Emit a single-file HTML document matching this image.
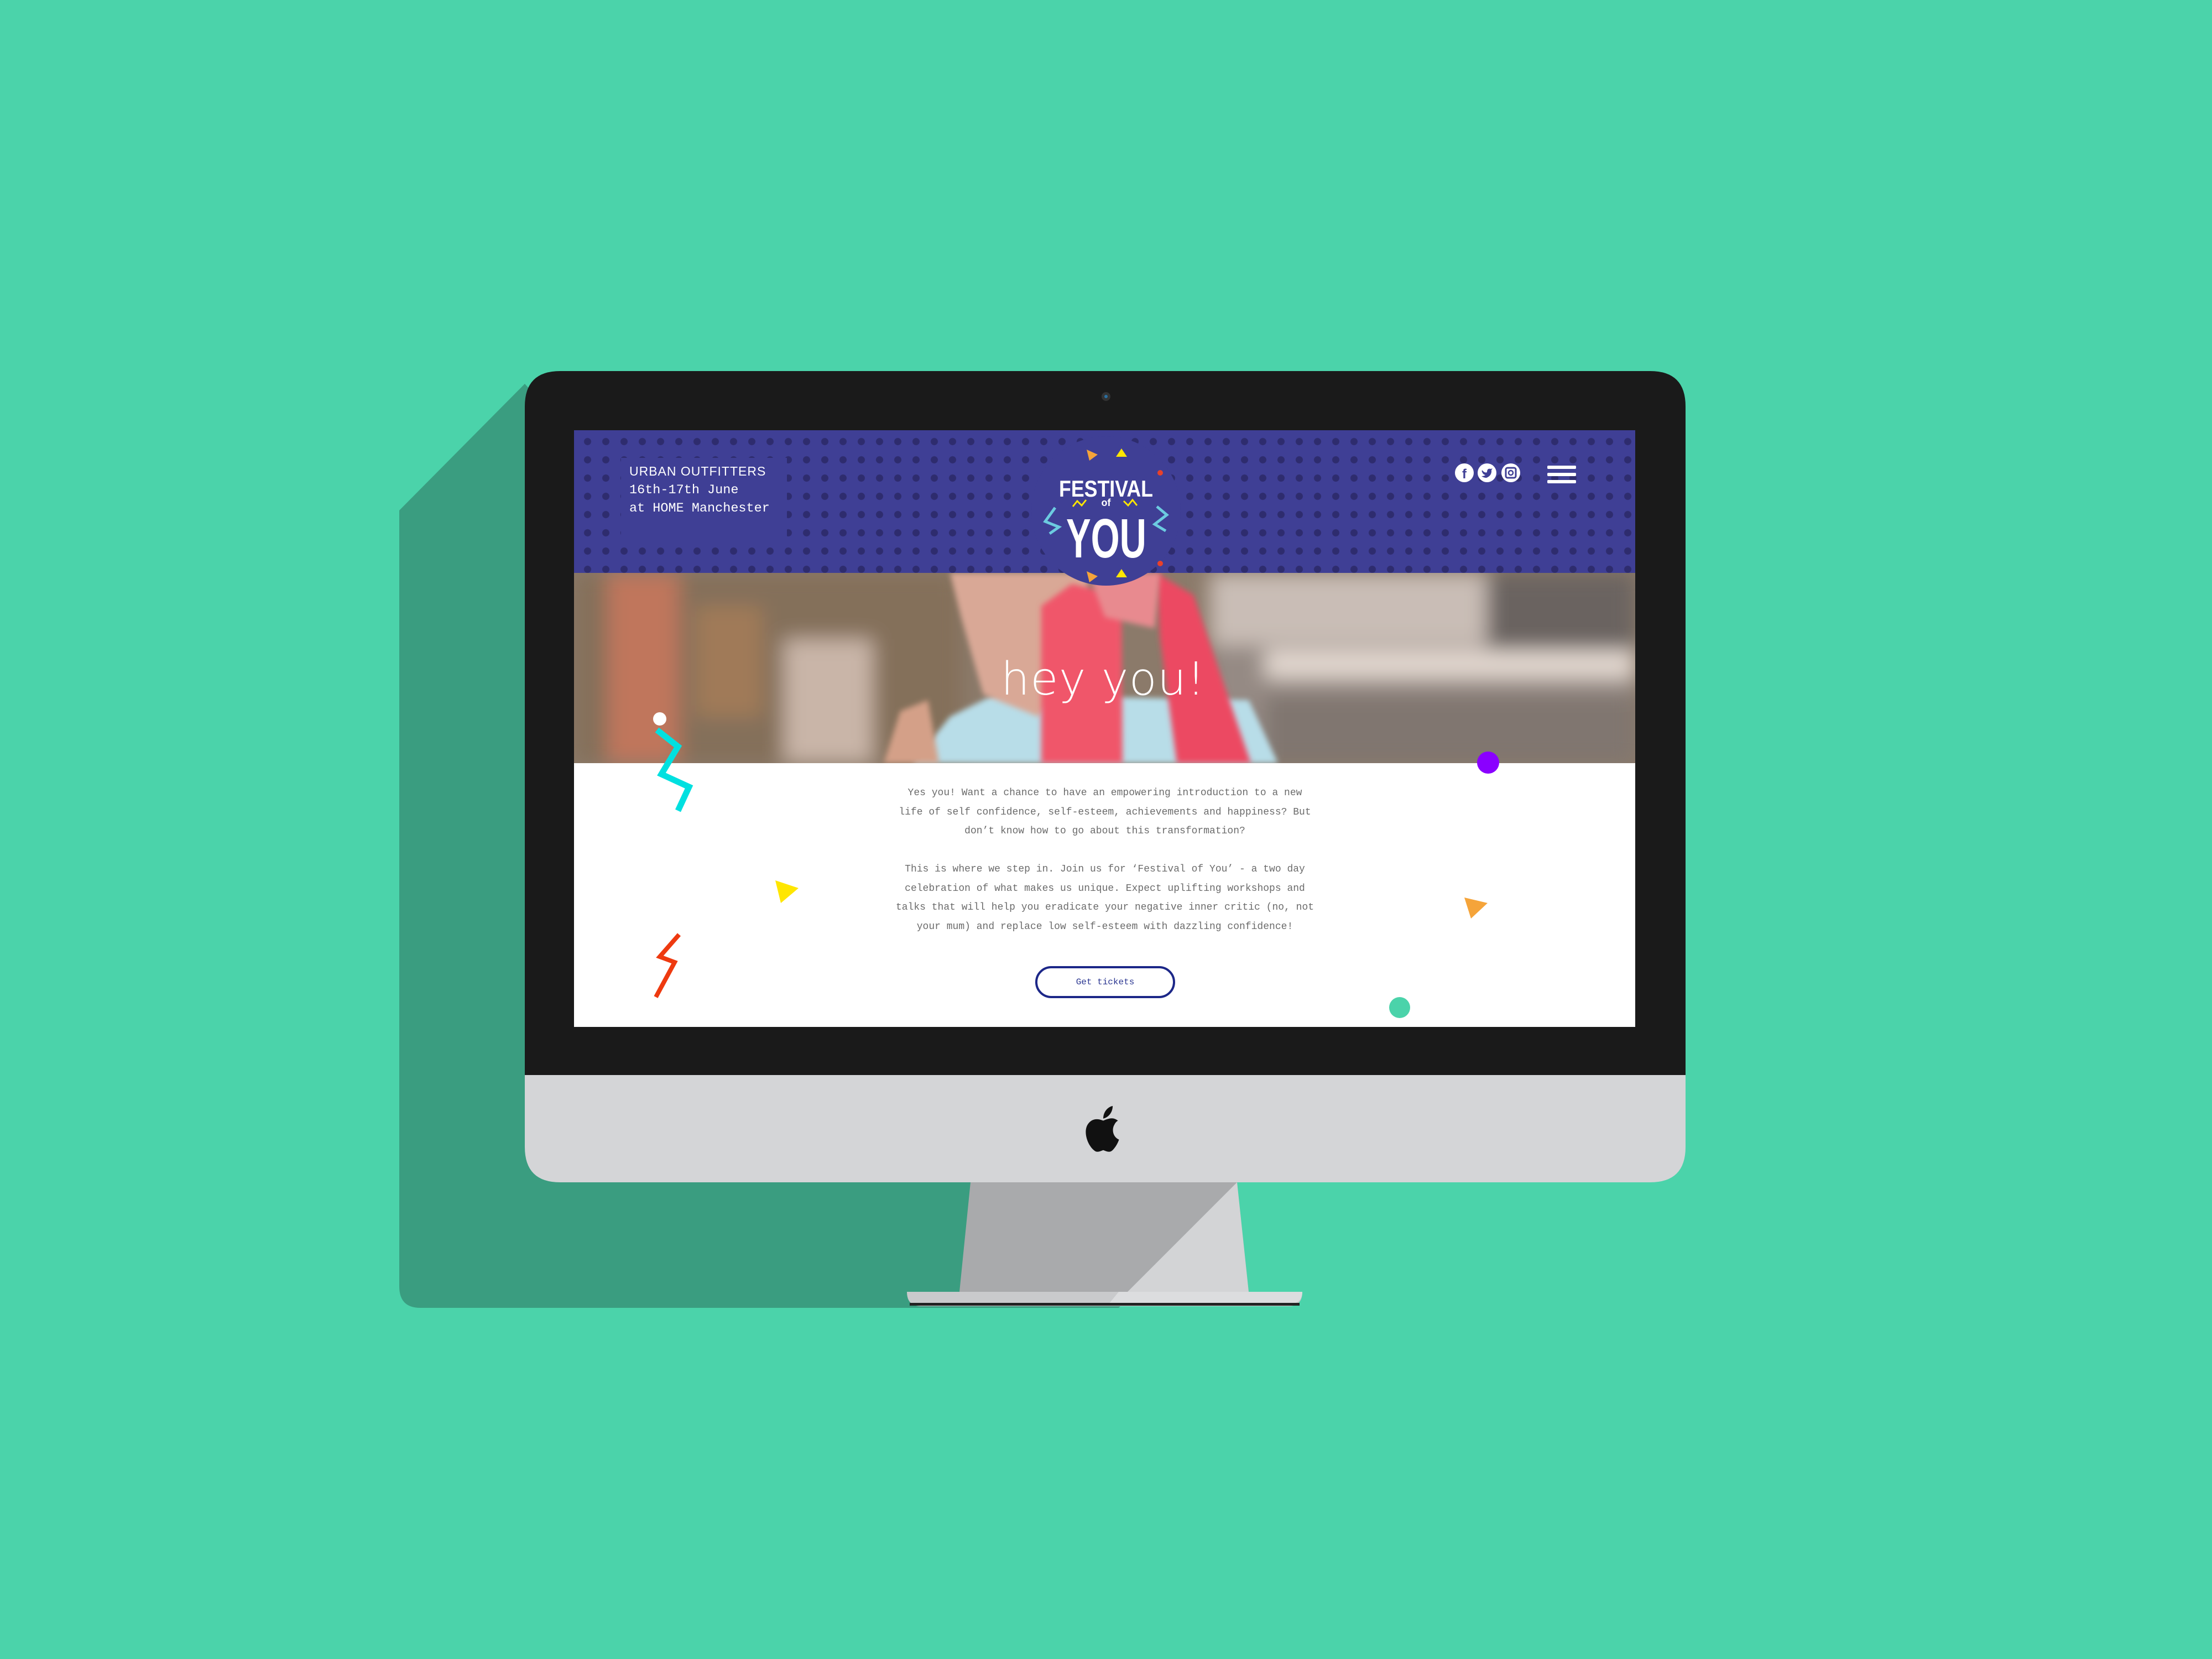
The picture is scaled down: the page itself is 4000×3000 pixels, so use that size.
<!DOCTYPE html>
<html><head><meta charset="utf-8"><style>
html,body{margin:0;padding:0}
body{width:4000px;height:3000px;background:#4bd3aa;position:relative;overflow:hidden;font-family:"Liberation Mono",monospace}
.a{position:absolute}
</style></head><body>
<svg class="a" style="left:0;top:0" width="4000" height="3000">
<path d="M949 694 L722 923 L722 2326 Q722 2365 760 2365 L2023 2365 L2237 2138 Z" fill="#3a9d80"/>
<path d="M1755 2138 L2237 2138 L2258 2336 L1735 2336 Z" fill="#a9aaac"/>
<path d="M2237 2138 L2258 2336 L2023 2352 Z" fill="#d3d4d6"/>
<path d="M1640 2336 L2355 2336 Q2355 2362 2330 2362 L1665 2362 Q1640 2362 1640 2336 Z" fill="#c9cacc"/>
<path d="M2023 2336 L2355 2336 Q2355 2358 2330 2358 L2005 2358 Z" fill="#dcdddf"/>
<rect x="1645" y="2356" width="705" height="5" fill="#222"/>
<path d="M1013 671 L2984 671 Q3048 671 3048 735 L3048 1944 L949 1944 L949 735 Q949 671 1013 671 Z" fill="#1a1a1a"/>
<path d="M949 1944 L3048 1944 L3048 2074 Q3048 2138 2984 2138 L1013 2138 Q949 2138 949 2074 Z" fill="#d4d5d7"/>
<circle cx="2000" cy="717" r="8" fill="#333"/><circle cx="2000" cy="717" r="3" fill="#2a6fa0"/>
<g transform="translate(1995,2036) scale(1.9)" fill="#111">
<path d="M14 -5 C10 -8 7 -8 0 -5 C-7 -8 -12 -6 -15 -1 C-19 6 -15 18 -9 23 C-6 26 -3 24 0 23 C3 24 6 26 9 23 C12 20 14 16 15 13 C10 11 8 5 10 0 C11 -2 12 -4 14 -5 Z"/>
<path d="M0 -7 C0 -13 4 -18 9 -19 C9 -13 5 -8 0 -7 Z"/>
</g>
</svg>
<div class="a" style="left:1038px;top:778px;width:1919px;height:1079px;background:#fff;overflow:hidden">
 <svg class="a" style="left:0;top:258px" width="1919" height="344">
  <defs><filter id="b"><feGaussianBlur stdDeviation="18"/></filter><filter id="b2"><feGaussianBlur stdDeviation="5"/></filter></defs>
  <rect width="1919" height="344" fill="#8b7a6a"/>
  <g filter="url(#b)">
   <rect x="0" y="0" width="700" height="344" fill="#84705a"/>
   <rect x="60" y="0" width="130" height="344" fill="#c0765c"/>
   <rect x="220" y="60" width="120" height="200" fill="#a07a58"/>
   <rect x="380" y="120" width="160" height="224" fill="#c9b5a8"/>
   <rect x="1150" y="0" width="769" height="344" fill="#958a84"/>
   <rect x="1150" y="0" width="600" height="130" fill="#c9bdb6"/>
   <rect x="1250" y="140" width="669" height="50" fill="#e3d8d0"/>
   <rect x="1250" y="220" width="669" height="124" fill="#807670"/>
   <rect x="1650" y="0" width="269" height="140" fill="#6b6460"/>
  </g>
  <path d="M612 344 L680 260 L760 220 L1220 230 L1273 344 Z" fill="#b8dde8" filter="url(#b2)"/>
  <path d="M680 0 L930 0 L920 150 L840 260 L740 220 L700 80 Z" fill="#d9a896" filter="url(#b2)"/>
  <path d="M560 344 L590 250 L640 230 L660 344 Z" fill="#d4a088" filter="url(#b2)"/>
  <path d="M845 60 L900 20 L990 40 L992 344 L845 344 Z" fill="#f0566a" filter="url(#b2)"/>
  <path d="M1053 0 L1120 40 L1224 344 L1090 344 L1060 120 Z" fill="#ec4a62" filter="url(#b2)"/>
  <path d="M930 0 L1060 0 L1050 100 L960 80 Z" fill="#e88a8f" filter="url(#b2)"/>
  <text x="772" y="220" fill="#fff" font-family="DejaVu Sans,Liberation Sans,sans-serif" font-size="82" font-weight="200" letter-spacing="3" textLength="372" lengthAdjust="spacing">hey you!</text>
 </svg>
 <div class="a" style="left:0;top:0;width:1919px;height:258px;background-color:#3f3f95;background-image:radial-gradient(circle,#2e2c6e 6px,transparent 7px);background-size:33px 33px;background-position:8px 4px"></div>
 <div class="a" style="left:85px;top:50px;width:300px;height:160px;background:#3f3f95"></div>
 <div class="a" style="left:100px;top:58px;color:#fff;font-size:23px;line-height:33px;font-family:'Liberation Sans Narrow','Liberation Sans',sans-serif;letter-spacing:1px">URBAN OUTFITTERS</div>
 <div class="a" style="left:100px;top:92px;color:#fff;font-size:23.5px;line-height:33px;white-space:pre">16th-17th June
at HOME Manchester</div>
 <svg class="a" style="left:822px;top:10px" width="280" height="290">
  <circle cx="140" cy="136" r="135" fill="#3f3f95"/>
  <polygon points="105,25 125,34 110,45" fill="#f5a43a"/><polygon points="168,23 178,38 158,38" fill="#ffe600"/>
  <polygon points="105,245 125,254 110,265" fill="#f5a43a"/><polygon points="168,241 178,256 158,256" fill="#ffe600"/>
  <circle cx="238" cy="67" r="5" fill="#e8412a"/><circle cx="238" cy="231" r="5" fill="#e8412a"/>
  <polyline points="48,130 30,155 55,165 38,177" fill="none" stroke="#6ccbe0" stroke-width="5"/>
  <polyline points="232,128 250,143 228,160 248,172" fill="none" stroke="#6ccbe0" stroke-width="5"/>
  <polyline points="80,128 88,118 96,126 104,116" fill="none" stroke="#ffe600" stroke-width="3"/>
  <polyline points="172,118 180,126 188,116 196,126" fill="none" stroke="#ffe600" stroke-width="3"/>
  <text x="55" y="110" fill="#fff" font-family="Liberation Sans Narrow,Liberation Sans,sans-serif" font-size="42" font-weight="bold" textLength="170" lengthAdjust="spacingAndGlyphs">FESTIVAL</text>
  <text x="140" y="127" text-anchor="middle" fill="#fff" font-family="Liberation Sans,sans-serif" font-size="18" font-weight="bold">of</text>
  <text x="68" y="220" fill="#fff" font-family="Liberation Sans Narrow,Liberation Sans,sans-serif" font-size="100" font-weight="bold" textLength="145" lengthAdjust="spacingAndGlyphs">YOU</text>
 </svg>
 <svg class="a" style="left:1590px;top:58px" width="240" height="60">
  <circle cx="20" cy="19" r="17" fill="#fff"/><text x="20" y="29" text-anchor="middle" font-family="Liberation Sans,sans-serif" font-weight="bold" font-size="24" fill="#3f3f95">f</text>
  <circle cx="61" cy="19" r="17" fill="#fff"/><path d="M52 14 Q57 20 61 18 Q61 10 68 12 L71 11 L69 14 Q70 24 60 28 Q55 28 51 25 Q56 25 58 23 Q54 22 53 19 Q51 17 52 14Z" fill="#3f3f95"/>
  <circle cx="104" cy="19" r="17" fill="#fff"/><rect x="95" y="10" width="18" height="18" rx="3" fill="none" stroke="#3f3f95" stroke-width="3"/><circle cx="104" cy="19" r="4" fill="none" stroke="#3f3f95" stroke-width="2.5"/>
  <rect x="170" y="6" width="52" height="6" rx="2" fill="#fff"/><rect x="170" y="19" width="52" height="6" rx="2" fill="#fff"/><rect x="170" y="32" width="52" height="6" rx="2" fill="#fff"/>
 </svg>
 <div class="a" style="left:460px;top:639px;width:1000px;text-align:center;color:#6b6b6b;font-size:18px;line-height:34.5px;white-space:nowrap">Yes you! Want a chance to have an empowering introduction to a new<br>life of self confidence, self-esteem, achievements and happiness? But<br>don’t know how to go about this transformation?<br><br>This is where we step in. Join us for ‘Festival of You’ - a two day<br>celebration of what makes us unique. Expect uplifting workshops and<br>talks that will help you eradicate your negative inner critic (no, not<br>your mum) and replace low self-esteem with dazzling confidence!</div>
 <div class="a" style="left:834px;top:969px;width:245px;height:50px;border:4px solid #1c2788;border-radius:30px;color:#2a3590;font-size:16px;line-height:50px;text-align:center">Get tickets</div>
 <svg class="a" style="left:0;top:0" width="1919" height="1079">
  <circle cx="155" cy="522" r="12" fill="#fff"/>
  <polyline points="150,542 188,572 158,622 208,645 188,688" fill="none" stroke="#00e0e0" stroke-width="11"/>
  <polyline points="190,912 155,952 182,962 148,1025" fill="none" stroke="#ee3a10" stroke-width="8"/>
  <polygon points="364,814 406,828 374,855" fill="#ffe600"/>
  <polygon points="1610,845 1652,855 1622,883" fill="#f5a43a"/>
  <circle cx="1653" cy="601" r="20" fill="#8a00ff"/>
  <circle cx="1493" cy="1044" r="19" fill="#4bd3aa"/>
 </svg>
</div>
</body></html>
